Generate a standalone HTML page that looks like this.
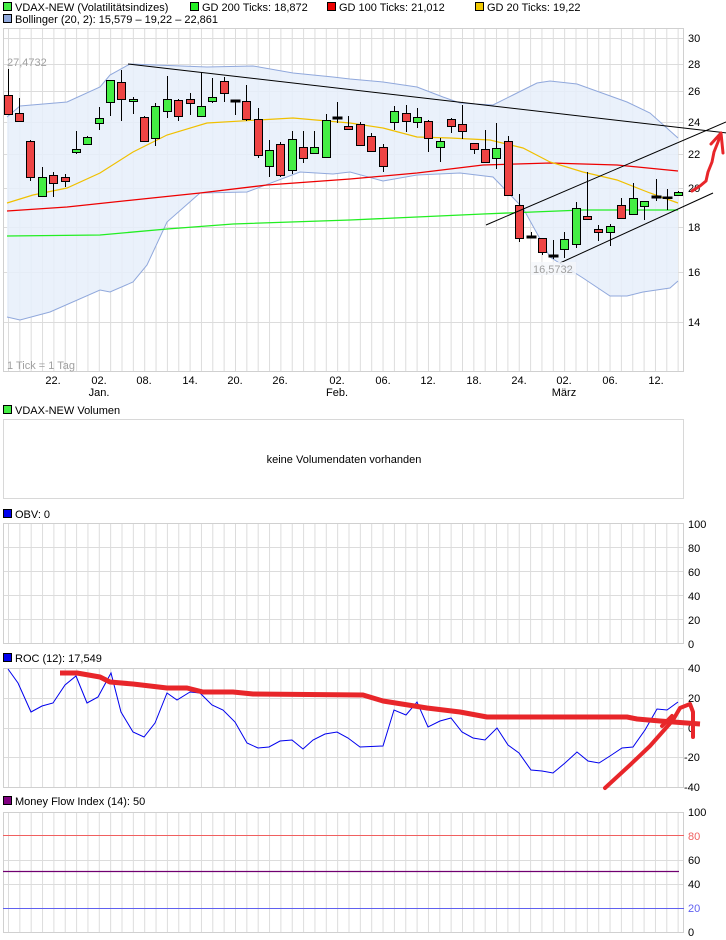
<!DOCTYPE html>
<html><head><meta charset="utf-8"><style>
html,body{margin:0;padding:0;background:#fff;}
svg{display:block;font-family:"Liberation Sans",Arial,sans-serif;font-size:11px;}
</style></head><body>
<svg width="726" height="940" viewBox="0 0 726 940" xmlns="http://www.w3.org/2000/svg">
<defs>
<pattern id="vg" x="8" y="0" width="11.35" height="940" patternUnits="userSpaceOnUse">
<line x1="0.5" y1="0" x2="0.5" y2="940" stroke="#dcdcdc" stroke-width="1"/>
</pattern>
</defs>
<!-- legend -->
<rect x="3.5" y="2.5" width="8" height="8" fill="#44ee44" stroke="#000"/>
<text x="15" y="11">VDAX-NEW (Volatilitätsindizes)</text>
<rect x="190.5" y="2.5" width="8" height="8" fill="#22ee22" stroke="#000"/>
<text x="202" y="11">GD 200 Ticks: 18,872</text>
<rect x="327.5" y="2.5" width="8" height="8" fill="#ee0000" stroke="#000"/>
<text x="339" y="11">GD 100 Ticks: 21,012</text>
<rect x="475.5" y="2.5" width="8" height="8" fill="#f0c800" stroke="#000"/>
<text x="487" y="11">GD 20 Ticks: 19,22</text>
<rect x="3.5" y="14.5" width="8" height="8" fill="#90a8dc" stroke="#000"/>
<text x="15" y="23">Bollinger (20, 2): 15,579 – 19,22 – 22,861</text>

<!-- main chart -->
<rect x="3" y="28" width="681" height="344" fill="url(#vg)"/>
<g stroke="#dcdcdc">
<line x1="3" y1="38.5" x2="684" y2="38.5"/><line x1="3" y1="64.5" x2="684" y2="64.5"/>
<line x1="3" y1="91.5" x2="684" y2="91.5"/><line x1="3" y1="122.5" x2="684" y2="122.5"/>
<line x1="3" y1="154.5" x2="684" y2="154.5"/><line x1="3" y1="188.5" x2="684" y2="188.5"/>
<line x1="3" y1="227.5" x2="684" y2="227.5"/><line x1="3" y1="272.5" x2="684" y2="272.5"/>
<line x1="3" y1="322.5" x2="684" y2="322.5"/>
</g>
<rect x="3.5" y="28.5" width="680" height="343" fill="none" stroke="#d0d0d0"/>
<!-- bollinger -->
<path d="M7,117 L20,106 67,102 100,87 110,75 130,64 207,67 253,66 293,73 333,77 350,79 383,82 417,87 443,97 460,103 493,105 513,95 537,83 550,81 577,84 627,102 650,113 678,138 L678,281 670,288 643,292 627,296 610,296 583,278 550,257 523,208 493,177 460,173 417,175 383,181 350,172 333,174 300,172 247,192 200,193 167,222 147,265 133,282 110,292 100,290 50,312 20,320 7,317 Z" fill="#e6eefa" fill-opacity="0.85" stroke="none"/>
<path d="M7,117 L20,106 67,102 100,87 110,75 130,64 207,67 253,66 293,73 333,77 350,79 383,82 417,87 443,97 460,103 493,105 513,95 537,83 550,81 577,84 627,102 650,113 678,138" fill="none" stroke="#90a8dc"/>
<path d="M7,317 L20,320 50,312 100,290 110,292 133,282 147,265 167,222 200,193 247,192 300,172 333,174 350,172 383,181 417,175 460,173 493,177 523,208 550,257 583,278 610,296 627,296 643,292 670,288 678,281" fill="none" stroke="#90a8dc"/>
<!-- MAs -->
<path d="M7,236 L100,235 167,229 233,224 350,220 483,214 583,210 678,210" fill="none" stroke="#22ee22" stroke-width="1.3"/>
<path d="M7,211 L67,207 133,200 200,193 267,185 350,179 417,173 483,165 550,163 617,165 678,171" fill="none" stroke="#ee0000" stroke-width="1.3"/>
<path d="M7,203 L33,195 67,188 100,173 133,152 167,135 207,123 293,118 350,123 383,128 417,137 450,138 490,140 523,148 550,162 583,172 617,180 650,193 678,203" fill="none" stroke="#f0c000" stroke-width="1.2"/>
<!-- candles -->
<g stroke="#000" stroke-width="1">
<g id="c">
<line x1="8.5" y1="69" x2="8.5" y2="114"/><rect x="4.5" y="95.5" width="8" height="19" fill="#ee4444"/>
<line x1="19.5" y1="98" x2="19.5" y2="121"/><rect x="15.5" y="113.5" width="8" height="8" fill="#ee4444"/>
<line x1="30.5" y1="140" x2="30.5" y2="181"/><rect x="26.5" y="141.5" width="8" height="36" fill="#ee4444"/>
<line x1="42.5" y1="167" x2="42.5" y2="197"/><rect x="38.5" y="177.5" width="8" height="19" fill="#44ee44"/>
<line x1="53.5" y1="172" x2="53.5" y2="197"/><rect x="49.5" y="175.5" width="8" height="8" fill="#ee4444"/>
<line x1="65.5" y1="174" x2="65.5" y2="187"/><rect x="61.5" y="177.5" width="8" height="4" fill="#ee4444"/>
<line x1="76.5" y1="131" x2="76.5" y2="154"/><rect x="72.5" y="149.5" width="8" height="3" fill="#44ee44"/>
<line x1="87.5" y1="136" x2="87.5" y2="144"/><rect x="83.5" y="137.5" width="8" height="7" fill="#44ee44"/>
<line x1="99.5" y1="107" x2="99.5" y2="130"/><rect x="95.5" y="118.5" width="8" height="5" fill="#44ee44"/>
<line x1="110.5" y1="80" x2="110.5" y2="116"/><rect x="106.5" y="80.5" width="8" height="22" fill="#44ee44"/>
<line x1="121.5" y1="70" x2="121.5" y2="121"/><rect x="117.5" y="82.5" width="8" height="17" fill="#ee4444"/>
<line x1="133.5" y1="97" x2="133.5" y2="114"/><rect x="129.5" y="99.5" width="8" height="2" fill="#44ee44"/>
<line x1="144.5" y1="116" x2="144.5" y2="142"/><rect x="140.5" y="117.5" width="8" height="24" fill="#ee4444"/>
<line x1="155.5" y1="103" x2="155.5" y2="146"/><rect x="151.5" y="106.5" width="8" height="32" fill="#44ee44"/>
<line x1="167.5" y1="76" x2="167.5" y2="118"/><rect x="163.5" y="99.5" width="8" height="12" fill="#44ee44"/>
<line x1="178.5" y1="99" x2="178.5" y2="121"/><rect x="174.5" y="100.5" width="8" height="16" fill="#ee4444"/>
<line x1="190.5" y1="93" x2="190.5" y2="115"/><rect x="186.5" y="99.5" width="8" height="4" fill="#ee4444"/>
<line x1="201.5" y1="72" x2="201.5" y2="117"/><rect x="197.5" y="106.5" width="8" height="10" fill="#44ee44"/>
<line x1="212.5" y1="78" x2="212.5" y2="103"/><rect x="208.5" y="97.5" width="8" height="4" fill="#44ee44"/>
<line x1="224.5" y1="77" x2="224.5" y2="102"/><rect x="220.5" y="81.5" width="8" height="12" fill="#ee4444"/>
<line x1="235.5" y1="100" x2="235.5" y2="115"/><rect x="231" y="100" width="9" height="2" fill="#000"/>
<line x1="246.5" y1="85" x2="246.5" y2="121"/><rect x="242.5" y="101.5" width="8" height="18" fill="#ee4444"/>
<line x1="258.5" y1="108" x2="258.5" y2="158"/><rect x="254.5" y="119.5" width="8" height="36" fill="#ee4444"/>
<line x1="269.5" y1="140" x2="269.5" y2="177"/><rect x="265.5" y="150.5" width="8" height="16" fill="#44ee44"/>
<line x1="280.5" y1="142" x2="280.5" y2="177"/><rect x="276.5" y="144.5" width="8" height="31" fill="#ee4444"/>
<line x1="292.5" y1="131" x2="292.5" y2="174"/><rect x="288.5" y="139.5" width="8" height="31" fill="#44ee44"/>
<line x1="303.5" y1="131" x2="303.5" y2="163"/><rect x="299.5" y="147.5" width="8" height="11" fill="#ee4444"/>
<line x1="314.5" y1="131" x2="314.5" y2="153"/><rect x="310.5" y="147.5" width="8" height="6" fill="#44ee44"/>
<line x1="326.5" y1="114" x2="326.5" y2="158"/><rect x="322.5" y="120.5" width="8" height="37" fill="#44ee44"/>
<line x1="337.5" y1="102" x2="337.5" y2="123"/><rect x="333" y="117" width="9" height="2" fill="#000"/>
<line x1="348.5" y1="116" x2="348.5" y2="129"/><rect x="344.5" y="126.5" width="8" height="3" fill="#ee4444"/>
<line x1="360.5" y1="122" x2="360.5" y2="145"/><rect x="356.5" y="124.5" width="8" height="21" fill="#ee4444"/>
<line x1="371.5" y1="133" x2="371.5" y2="151"/><rect x="367.5" y="136.5" width="8" height="15" fill="#ee4444"/>
<line x1="383.5" y1="144" x2="383.5" y2="172"/><rect x="379.5" y="147.5" width="8" height="19" fill="#ee4444"/>
<line x1="394.5" y1="106" x2="394.5" y2="130"/><rect x="390.5" y="111.5" width="8" height="11" fill="#44ee44"/>
<line x1="406.5" y1="105" x2="406.5" y2="132"/><rect x="402.5" y="113.5" width="8" height="8" fill="#ee4444"/>
<line x1="417.5" y1="108" x2="417.5" y2="128"/><rect x="413.5" y="117.5" width="8" height="5" fill="#44ee44"/>
<line x1="428.5" y1="120" x2="428.5" y2="152"/><rect x="424.5" y="121.5" width="8" height="17" fill="#ee4444"/>
<line x1="440.5" y1="138" x2="440.5" y2="162"/><rect x="436.5" y="141.5" width="8" height="6" fill="#44ee44"/>
<line x1="451.5" y1="118" x2="451.5" y2="133"/><rect x="447.5" y="119.5" width="8" height="7" fill="#ee4444"/>
<line x1="462.5" y1="105" x2="462.5" y2="139"/><rect x="458.5" y="124.5" width="8" height="7" fill="#ee4444"/>
<line x1="474.5" y1="143" x2="474.5" y2="154"/><rect x="470.5" y="143.5" width="8" height="6" fill="#ee4444"/>
<line x1="485.5" y1="130" x2="485.5" y2="162"/><rect x="481.5" y="149.5" width="8" height="13" fill="#ee4444"/>
<line x1="496.5" y1="123" x2="496.5" y2="169"/><rect x="492.5" y="148.5" width="8" height="10" fill="#44ee44"/>
<line x1="508.5" y1="136" x2="508.5" y2="195"/><rect x="504.5" y="141.5" width="8" height="54" fill="#ee4444"/>
<line x1="519.5" y1="194" x2="519.5" y2="242"/><rect x="515.5" y="205.5" width="8" height="33" fill="#ee4444"/>
<line x1="531.5" y1="232" x2="531.5" y2="237"/><rect x="527" y="236" width="9" height="2" fill="#000"/>
<line x1="542.5" y1="238" x2="542.5" y2="255"/><rect x="538.5" y="238.5" width="8" height="14" fill="#ee4444"/>
<line x1="553.5" y1="240" x2="553.5" y2="259"/><rect x="549" y="255" width="9" height="2" fill="#000"/>
<line x1="564.5" y1="232" x2="564.5" y2="258"/><rect x="560.5" y="239.5" width="8" height="10" fill="#44ee44"/>
<line x1="576.5" y1="202" x2="576.5" y2="248"/><rect x="572.5" y="208.5" width="8" height="36" fill="#44ee44"/>
<line x1="587.5" y1="172" x2="587.5" y2="220"/><rect x="583.5" y="216.5" width="8" height="3" fill="#ee4444"/>
<line x1="598.5" y1="225" x2="598.5" y2="241"/><rect x="594.5" y="229.5" width="8" height="3" fill="#ee4444"/>
<line x1="610.5" y1="224" x2="610.5" y2="246"/><rect x="606.5" y="226.5" width="8" height="6" fill="#44ee44"/>
<line x1="621.5" y1="198" x2="621.5" y2="218"/><rect x="617.5" y="205.5" width="8" height="13" fill="#ee4444"/>
<line x1="633.5" y1="183" x2="633.5" y2="214"/><rect x="629.5" y="198.5" width="8" height="16" fill="#44ee44"/>
<line x1="644.5" y1="201" x2="644.5" y2="220"/><rect x="640.5" y="201.5" width="8" height="5" fill="#44ee44"/>
<line x1="656.5" y1="179" x2="656.5" y2="201"/><rect x="652" y="196" width="9" height="2" fill="#000"/>
<line x1="667.5" y1="189" x2="667.5" y2="210"/><rect x="663" y="197" width="9" height="1.5" fill="#000"/>
<line x1="678.5" y1="191" x2="678.5" y2="195"/><rect x="674.5" y="192.5" width="8" height="3" fill="#44ee44"/>
</g>
</g>
<!-- trendlines -->
<g stroke="#000" stroke-width="1" fill="none">
<line x1="128" y1="64" x2="727" y2="133"/>
<line x1="486" y1="225" x2="726" y2="122"/>
<line x1="560" y1="263" x2="713" y2="193"/>
</g>
<!-- labels main -->
<text x="7" y="66" fill="#a0a0a0">27,4732</text>
<rect x="531" y="262" width="45" height="13" fill="#f4f6fa" opacity="0.8"/>
<text x="533" y="273" fill="#a0a0a0">16,5732</text>
<text x="7" y="369" fill="#a0a0a0">1 Tick = 1 Tag</text>
<g text-anchor="start">
<text x="688" y="42">30</text><text x="688" y="68">28</text><text x="688" y="95">26</text>
<text x="688" y="126">24</text><text x="688" y="158">22</text><text x="688" y="192">20</text>
<text x="688" y="231">18</text><text x="688" y="276">16</text><text x="688" y="326">14</text>
</g>
<g text-anchor="middle">
<text x="53" y="384">22.</text><text x="99" y="384">02.</text><text x="144" y="384">08.</text>
<text x="190" y="384">14.</text><text x="235" y="384">20.</text><text x="280" y="384">26.</text>
<text x="337" y="384">02.</text><text x="383" y="384">06.</text><text x="428" y="384">12.</text>
<text x="474" y="384">18.</text><text x="519" y="384">24.</text><text x="564" y="384">02.</text>
<text x="610" y="384">06.</text><text x="656" y="384">12.</text>
<text x="99" y="396">Jan.</text><text x="337" y="396">Feb.</text><text x="564" y="396">März</text>
</g>
<!-- red arrow main -->
<path d="M692,191 L700,186 706,181 708,172 712,162 714,152 718,142 721,133" fill="none" stroke="#e8262a" stroke-width="3" stroke-linecap="round" stroke-linejoin="round"/>
<path d="M711,144 L721,133 L723,153" fill="none" stroke="#e8262a" stroke-width="3" stroke-linecap="round" stroke-linejoin="round"/>

<!-- volume -->
<rect x="3.5" y="405.5" width="8" height="8" fill="#44ee44" stroke="#000"/>
<text x="15" y="414">VDAX-NEW Volumen</text>
<rect x="3.5" y="419.5" width="680" height="79" fill="none" stroke="#d8d8d8"/>
<text x="344" y="463" text-anchor="middle">keine Volumendaten vorhanden</text>

<!-- OBV -->
<rect x="3.5" y="509.5" width="8" height="8" fill="#0000ee" stroke="#000"/>
<text x="15" y="518">OBV: 0</text>
<rect x="3" y="523" width="681" height="121" fill="url(#vg)"/>
<g stroke="#dcdcdc"><line x1="3" y1="547.5" x2="684" y2="547.5"/><line x1="3" y1="571.5" x2="684" y2="571.5"/><line x1="3" y1="595.5" x2="684" y2="595.5"/><line x1="3" y1="619.5" x2="684" y2="619.5"/></g>
<rect x="3.5" y="523.5" width="680" height="120" fill="none" stroke="#d0d0d0"/>
<text x="688" y="528">100</text><text x="688" y="552">80</text><text x="688" y="576">60</text><text x="688" y="600">40</text><text x="688" y="624">20</text><text x="688" y="648">0</text>

<!-- ROC -->
<rect x="3.5" y="653.5" width="8" height="8" fill="#0000ee" stroke="#000"/>
<text x="15" y="662">ROC (12): 17,549</text>
<rect x="3" y="668" width="681" height="119" fill="url(#vg)"/>
<g stroke="#dcdcdc"><line x1="3" y1="698.5" x2="684" y2="698.5"/><line x1="3" y1="728.5" x2="684" y2="728.5"/><line x1="3" y1="757.5" x2="684" y2="757.5"/></g>
<rect x="3.5" y="668.5" width="680" height="119" fill="none" stroke="#d0d0d0"/>
<text x="688" y="672">40</text><text x="688" y="702">20</text><text x="688" y="732">0</text><text x="684" y="761">-20</text><text x="684" y="791">-40</text>
<path d="M8,669 L18,683 31,712 42,706 53,703 65,685 76,676 87,703 98,697 111,673 121,712 133,732 144,737 155,723 167,693 177,700 190,692 200,693 212,705 223,710 235,722 247,743 258,748 269,747 280,741 292,740 303,749 313,740 325,734 337,732 348,738 360,747 383,746 394,710 406,715 417,702 428,727 440,721 451,718 462,732 473,738 485,740 497,728 508,745 519,753 531,770 542,771 553,773 565,763 577,752 588,761 599,763 610,756 622,748 633,747 645,730 657,709 667,710 678,702" fill="none" stroke="#0000ee" stroke-width="1"/>
<path d="M60,673 L77,673 100,677 110,682 133,684 167,688 187,688 203,692 233,692 253,694 363,695 383,701 427,708 460,712 487,717 627,717 637,719 660,721 700,724" fill="none" stroke="#e8262a" stroke-width="5" stroke-linejoin="round"/>
<path d="M605,788 L630,765 650,746 673,720 680,708 690,704 693,712 693,737" fill="none" stroke="#e8262a" stroke-width="4" stroke-linecap="round" stroke-linejoin="round"/>
<path d="M662,726 L672,716" stroke="#e8262a" stroke-width="4" stroke-linecap="round"/>

<!-- MFI -->
<rect x="3.5" y="796.5" width="8" height="8" fill="#800080" stroke="#000"/>
<text x="15" y="805">Money Flow Index (14): 50</text>
<rect x="3" y="812" width="681" height="120" fill="url(#vg)"/>
<g stroke="#dcdcdc"><line x1="3" y1="860.5" x2="684" y2="860.5"/><line x1="3" y1="884.5" x2="684" y2="884.5"/></g>
<rect x="3.5" y="812.5" width="680" height="120" fill="none" stroke="#d0d0d0"/>
<line x1="3" y1="835.5" x2="684" y2="835.5" stroke="#f06060"/>
<line x1="3" y1="908.5" x2="684" y2="908.5" stroke="#6060f0"/>
<line x1="3" y1="871.5" x2="679" y2="871.5" stroke="#700070" stroke-width="1.3"/>
<text x="688" y="816">100</text><text x="688" y="840" fill="#f06060">80</text><text x="688" y="864">60</text><text x="688" y="888">40</text><text x="688" y="912" fill="#6060f0">20</text><text x="688" y="936">0</text>
</svg>
</body></html>
